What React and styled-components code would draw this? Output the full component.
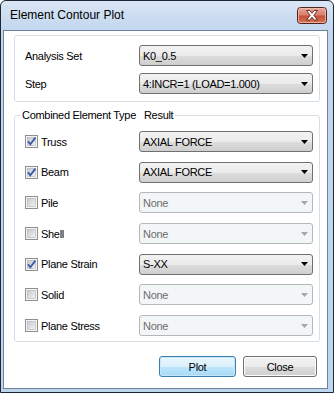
import styled, { createGlobalStyle } from "styled-components";

const GlobalStyle = createGlobalStyle`
  html, body {
    margin: 0;
    padding: 0;
    background: #ffffff;
  }
  * {
    box-sizing: border-box;
  }
`;

const rows = [
  { name: "Truss", checked: true, value: "AXIAL FORCE", enabled: true },
  { name: "Beam", checked: true, value: "AXIAL FORCE", enabled: true },
  { name: "Pile", checked: false, value: "None", enabled: false },
  { name: "Shell", checked: false, value: "None", enabled: false },
  { name: "Plane Strain", checked: true, value: "S-XX", enabled: true },
  { name: "Solid", checked: false, value: "None", enabled: false },
  { name: "Plane Stress", checked: false, value: "None", enabled: false },
];

function CloseGlyph() {
  return (
    <svg width="30" height="17" viewBox="0 0 30 17">
      <defs>
        <linearGradient id="redg" x1="0" y1="0" x2="0" y2="1">
          <stop offset="0" stopColor="#eaa898" />
          <stop offset="0.45" stopColor="#d9806c" />
          <stop offset="0.55" stopColor="#c4523a" />
          <stop offset="1" stopColor="#d5765a" />
        </linearGradient>
      </defs>
      <rect x="0.5" y="0.5" width="29" height="16" rx="3" fill="url(#redg)" stroke="#4e241d" />
      <rect x="1.5" y="1.5" width="27" height="14" rx="2" fill="none" stroke="#f3c6b9" strokeOpacity="0.7" />
      <path
        d="M9.5 3.5 L12.8 3.5 L15 6.3 L17.2 3.5 L20.5 3.5 L16.8 8.3 L20.5 13 L17.2 13 L15 10.2 L12.8 13 L9.5 13 L13.2 8.3 Z"
        fill="#ffffff"
        stroke="#5e2219"
        strokeWidth="0.9"
        strokeLinejoin="round"
      />
    </svg>
  );
}

function CheckBox({ checked }) {
  return (
    <svg width="13" height="13" viewBox="0 0 13 13">
      <defs>
        <linearGradient id="cbfill" x1="0" y1="0" x2="1" y2="1">
          <stop offset="0" stopColor="#c4c8ce" />
          <stop offset="1" stopColor="#f4f4f4" />
        </linearGradient>
      </defs>
      <rect x="0.5" y="0.5" width="12" height="12" fill="#f4f4f4" stroke="#8e8f8f" />
      <rect x="2.5" y="2.5" width="8" height="8" fill="url(#cbfill)" stroke="#b0b4b9" strokeWidth="0.6" />
      {checked && (
        <path d="M3 6.3 L5.3 9.3 L10.4 2.6" fill="none" stroke="#3b58a8" strokeWidth="1.8" />
      )}
    </svg>
  );
}

function Combo({ value, enabled }) {
  return (
    <ComboBox enabled={enabled}>
      <span>{value}</span>
      <svg width="7" height="4" viewBox="0 0 7 4">
        <path d="M0 0 H7 L3.5 4 Z" fill={enabled ? "#000000" : "#a5a8aa"} />
      </svg>
    </ComboBox>
  );
}

export default function App() {
  return (
    <>
      <GlobalStyle />
      <Window>
        <TitleBar>
          <span>Element Contour Plot</span>
          <CloseGlyph />
        </TitleBar>
        <Client>
          <Group>
            <FieldRow>
              <Label>Analysis Set</Label>
              <Combo value="K0_0.5" enabled />
            </FieldRow>
            <FieldRow>
              <Label>Step</Label>
              <Combo value="4:INCR=1 (LOAD=1.000)" enabled />
            </FieldRow>
          </Group>
          <TypeGroup>
            <Legend>
              <span>Combined Element Type</span>
              <LegendRight>Result</LegendRight>
            </Legend>
            <TypeList>
              {rows.map((r) => (
                <FieldRow key={r.name}>
                  <CheckLabel>
                    <CheckBox checked={r.checked} />
                    <span>{r.name}</span>
                  </CheckLabel>
                  <Combo value={r.value} enabled={r.enabled} />
                </FieldRow>
              ))}
            </TypeList>
          </TypeGroup>
          <ButtonRow>
            <Button primary>Plot</Button>
            <Button>Close</Button>
          </ButtonRow>
        </Client>
      </Window>
    </>
  );
}

const Window = styled.div`
  width: 334px;
  height: 393px;
  display: flex;
  flex-direction: column;
  border: 1px solid #1d2733;
  border-radius: 6px 6px 0 0;
  background: linear-gradient(to bottom, #dae6f5 0px, #c2d6ee 29px, #bed5ee 100%);
  font-family: "Liberation Sans", Arial, sans-serif;
`;

const TitleBar = styled.div`
  height: 29px;
  flex: none;
  display: flex;
  align-items: center;
  justify-content: space-between;
  padding: 0 6px 1px 9px;
  font-size: 12px;
  color: #000000;
`;

const Client = styled.div`
  flex: 1;
  margin: 0 5px 3px 2px;
  border: 1px solid #70839c;
  background: #ffffff;
  padding: 4px 7px 0 10px;
  display: flex;
  flex-direction: column;
  font-size: 11px;
  letter-spacing: -0.3px;
  color: #000000;
`;

const Group = styled.div`
  border: 1px solid #d5dfe5;
  border-radius: 3px;
  padding: 9px 6px 7px 10px;
  display: flex;
  flex-direction: column;
  gap: 7px;
`;

const TypeGroup = styled.fieldset`
  margin: 7px 0 0 0;
  border: 1px solid #d5dfe5;
  border-radius: 3px;
  padding: 9px 6px 5px 10px;
  min-width: 0;
`;

const Legend = styled.legend`
  padding: 0 2px;
  margin-left: -5px;
  line-height: 13px;
  display: flex;
`;

const LegendRight = styled.span`
  margin-left: 8px;
`;

const TypeList = styled.div`
  display: flex;
  flex-direction: column;
  gap: 9.7px;
`;

const FieldRow = styled.div`
  height: 21px;
  display: flex;
  align-items: center;
  justify-content: space-between;
`;

const Label = styled.span`
  white-space: nowrap;
`;

const CheckLabel = styled.label`
  display: flex;
  align-items: center;
  gap: 3px;
  white-space: nowrap;

  svg {
    flex: none;
  }
`;

const ComboBox = styled.div`
  width: 174px;
  height: 21px;
  display: flex;
  align-items: center;
  justify-content: space-between;
  padding: 0 4px 0 3px;
  border-radius: 3px;
  border: 1px solid ${(p) => (p.enabled ? "#707070" : "#b4b8ba")};
  background: ${(p) =>
    p.enabled
      ? "linear-gradient(to bottom, #f2f2f2 0%, #ebebeb 50%, #dddddd 51%, #cfcfcf 100%)"
      : "#f2f6f6"};
  color: ${(p) => (p.enabled ? "#000000" : "#6d6d6d")};
  white-space: nowrap;

  svg {
    flex: none;
  }
`;

const ButtonRow = styled.div`
  margin-top: 14px;
  padding-right: 3px;
  display: flex;
  justify-content: flex-end;
  gap: 7px;
`;

const Button = styled.button`
  width: ${(p) => (p.primary ? "77px" : "74px")};
  height: 21px;
  padding: 0;
  border-radius: 3px;
  font-family: "Liberation Sans", Arial, sans-serif;
  font-size: 11px;
  letter-spacing: -0.3px;
  color: #000000;
  border: 1px solid ${(p) => (p.primary ? "#3c7fb1" : "#707070")};
  background: ${(p) =>
    p.primary
      ? "linear-gradient(to bottom, #eaf6fd 0%, #d9f0fc 50%, #bee6fd 51%, #a7d9f5 100%)"
      : "linear-gradient(to bottom, #f2f2f2 0%, #ebebeb 50%, #dddddd 51%, #cfcfcf 100%)"};
  box-shadow: ${(p) =>
    p.primary ? "inset 0 0 0 1px #c6e7fb" : "inset 0 0 0 1px #fcfcfc"};
`;
